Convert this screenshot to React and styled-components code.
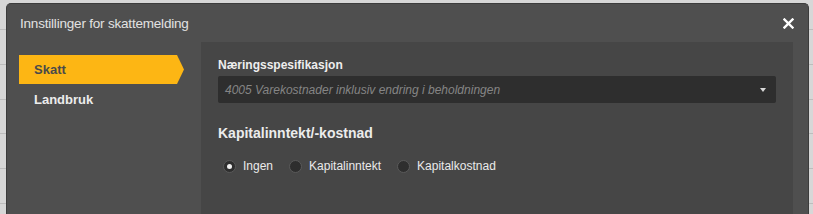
import styled, { createGlobalStyle } from "styled-components";

const GlobalStyle = createGlobalStyle`
	html, body {
		margin: 0;
		padding: 0;
	}
	body {
		background-color: #d7d7d7;
		background-image: repeating-linear-gradient(to bottom, transparent 0, transparent 29px, #bdbdbd 29px, #bdbdbd 30px, transparent 30px, transparent 34.8px);
		font-family: "Liberation Sans", Arial, sans-serif;
		overflow: hidden;
	}
`;

const Modal = styled.div`
	margin: 3px 4px 0 6px;
	height: calc(100vh - 3px);
	background: #4f4f4f;
	border: 1px solid #3c3c3c;
	border-bottom: none;
	border-radius: 5px 5px 0 0;
	box-sizing: border-box;
	display: flex;
	flex-direction: column;
`;

const Header = styled.div`
	height: 38px;
	display: flex;
	align-items: center;
	justify-content: space-between;
	padding: 0 14px 0 13px;
	flex-shrink: 0;
`;

const Title = styled.h1`
	margin: 0;
	font-size: 13.5px;
	font-weight: normal;
	color: #e2e2e2;
	letter-spacing: -0.2px;
`;

const CloseButton = styled.button`
	border: none;
	background: transparent;
	padding: 0;
	width: 12px;
	height: 12px;
	display: flex;
	align-items: center;
	justify-content: center;
	cursor: pointer;
`;

const Body = styled.div`
	display: flex;
	flex: 1;
	padding-right: 15px;
`;

const Nav = styled.nav`
	width: 194px;
	padding: 13px 0 0 12px;
	box-sizing: border-box;
	display: flex;
	flex-direction: column;
	gap: 1px;
`;

const NavItem = styled.div`
	width: 165px;
	height: 29px;
	box-sizing: border-box;
	padding-left: 15px;
	display: flex;
	align-items: center;
	font-size: 13px;
	font-weight: bold;
	color: ${(p) => (p.$active ? "#4a4a4a" : "#ececec")};
	background: ${(p) => (p.$active ? "#fdb614" : "transparent")};
	clip-path: polygon(0 0, calc(100% - 7px) 0, 100% 50%, calc(100% - 7px) 100%, 0 100%);
`;

const Panel = styled.section`
	flex: 1;
	background: #464646;
	padding: 16px 17px 0 17px;
`;

const Label = styled.div`
	font-size: 12px;
	font-weight: bold;
	color: #eeeeee;
	line-height: 14px;
	margin-bottom: 4px;
`;

const Select = styled.div`
	height: 27px;
	background: #2e2e2e;
	border-radius: 2px;
	display: flex;
	align-items: center;
	justify-content: space-between;
	padding: 0 10px 0 7px;
`;

const Placeholder = styled.span`
	font-size: 12px;
	font-style: italic;
	color: #858585;
`;

const Caret = styled.span`
	width: 0;
	height: 0;
	border-left: 3.5px solid transparent;
	border-right: 3.5px solid transparent;
	border-top: 4px solid #d8d8d8;
`;

const SectionTitle = styled.h2`
	margin: 22px 0 0 0;
	font-size: 14px;
	font-weight: bold;
	color: #ececec;
	line-height: 16px;
`;

const RadioRow = styled.div`
	display: flex;
	align-items: center;
	gap: 16px;
	margin-top: 18px;
	padding-left: 5px;
`;

const RadioOption = styled.label`
	display: flex;
	align-items: center;
	gap: 7px;
	font-size: 12px;
	color: #eaeaea;
`;

const RadioDot = styled.span`
	width: 11px;
	height: 11px;
	border-radius: 50%;
	background: #2e2e2e;
	border: 1px solid #5a5a5a;
	display: flex;
	align-items: center;
	justify-content: center;
	&::after {
		content: "";
		width: 5px;
		height: 5px;
		border-radius: 50%;
		background: ${(p) => (p.$checked ? "#f0f0f0" : "transparent")};
	}
`;

const options = [
	{ label: "Ingen", checked: true },
	{ label: "Kapitalinntekt" },
	{ label: "Kapitalkostnad" },
];

export default function App() {
	return (
		<>
			<GlobalStyle />
			<Modal>
				<Header>
					<Title>Innstillinger for skattemelding</Title>
					<CloseButton aria-label="Lukk">
						<svg width="11" height="11" viewBox="0 0 11 11">
							<path d="M1.5 1.5 L9.5 9.5 M9.5 1.5 L1.5 9.5" stroke="#ffffff" strokeWidth="2.4" strokeLinecap="square" />
						</svg>
					</CloseButton>
				</Header>
				<Body>
					<Nav>
						<NavItem $active>Skatt</NavItem>
						<NavItem>Landbruk</NavItem>
					</Nav>
					<Panel>
						<Label>Næringsspesifikasjon</Label>
						<Select>
							<Placeholder>4005 Varekostnader inklusiv endring i beholdningen</Placeholder>
							<Caret />
						</Select>
						<SectionTitle>Kapitalinntekt/-kostnad</SectionTitle>
						<RadioRow>
							{options.map((o) => (
								<RadioOption key={o.label}>
									<RadioDot $checked={o.checked} />
									{o.label}
								</RadioOption>
							))}
						</RadioRow>
					</Panel>
				</Body>
			</Modal>
		</>
	);
}
